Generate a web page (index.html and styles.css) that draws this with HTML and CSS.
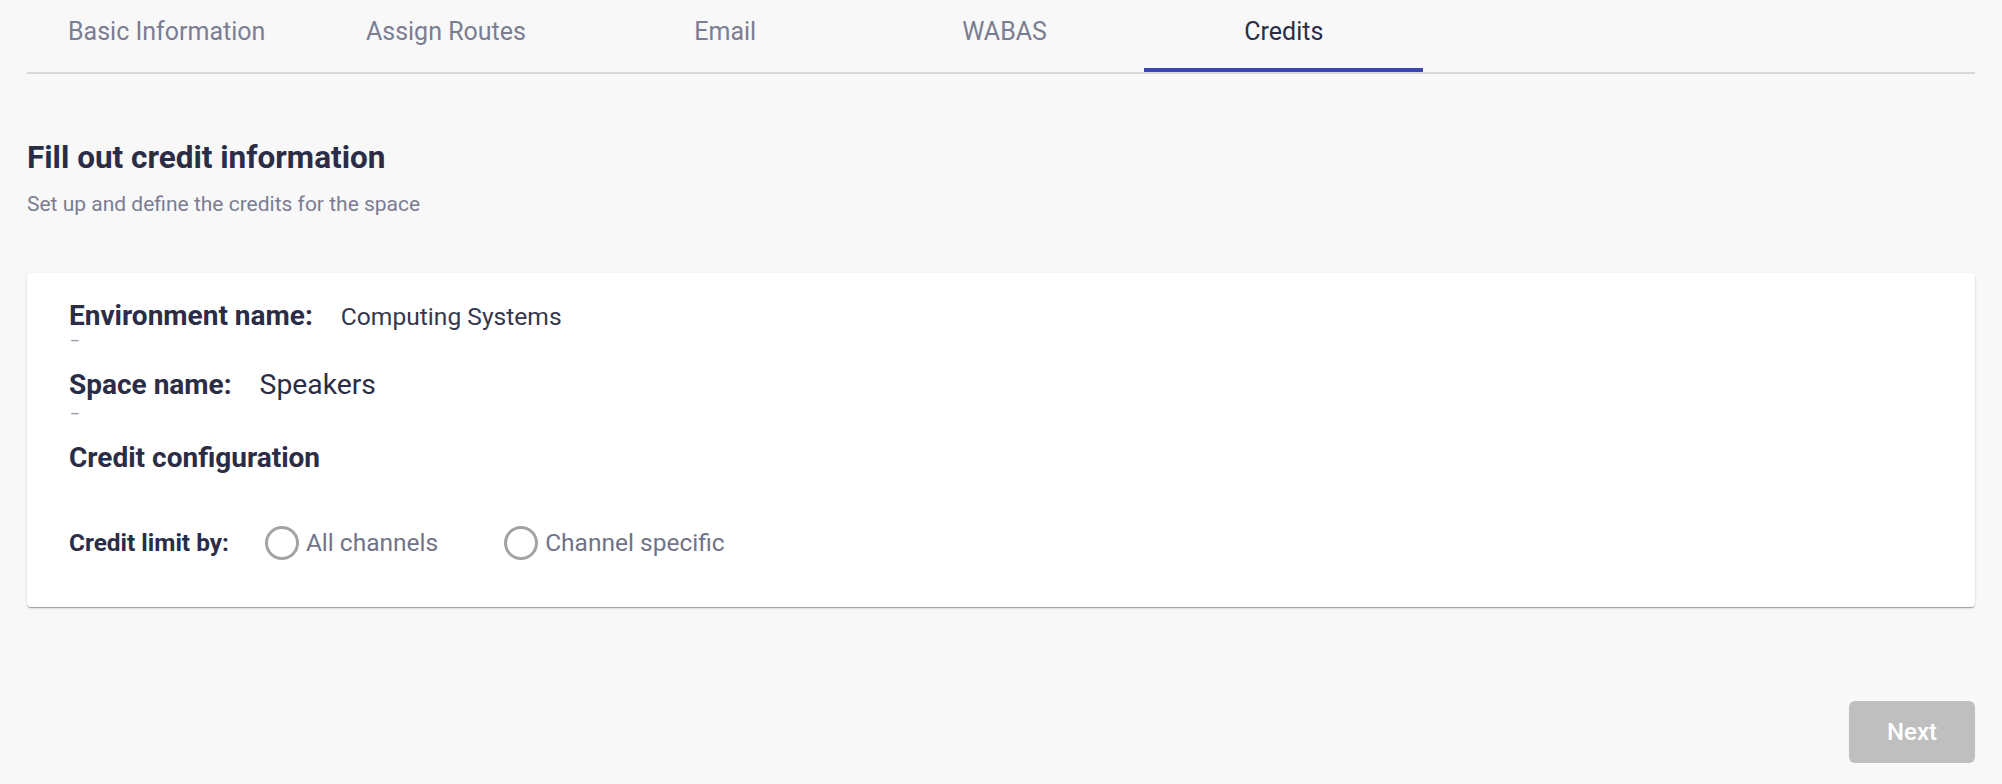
FILE: index.html
```html
<!DOCTYPE html>
<html lang="en">
  <head>
    <title>Space credits</title>
    <meta charset="utf-8">
    <link rel="stylesheet" href="styles.css">
  </head>
  <body>

  <div class="tabs">
    <div class="tab">Basic Information</div>
    <div class="tab">Assign Routes</div>
    <div class="tab">Email</div>
    <div class="tab">WABAS</div>
    <div class="tab active">Credits</div>
  </div>

  <h2 class="title">Fill out credit information</h2>
  <p class="subtitle">Set up and define the credits for the space</p>

  <div class="card">
    <div class="field">
      <span class="label">Environment name:</span>
      <span class="value">Computing Systems</span>
    </div>
    <div class="hint first">&ndash;</div>

    <div class="field space-row">
      <span class="label">Space name:</span>
      <span class="value big">Speakers</span>
    </div>
    <div class="hint second">&ndash;</div>

    <div class="field config-row">
      <span class="label">Credit configuration</span>
    </div>

    <div class="limit-row">
      <span class="limit-label">Credit limit by:</span>
      <label class="radio">
        <span class="circle"></span>
        <span class="radio-text">All channels</span>
      </label>
      <label class="radio">
        <span class="circle"></span>
        <span class="radio-text">Channel specific</span>
      </label>
    </div>
  </div>

  <div class="actions">
    <button class="next" type="button" disabled>Next</button>
  </div>

  </body>
</html>
```

FILE: styles.css
```css
  html {
    height: 100%;
  }
  body {
    margin: 0;
    padding: 0 27px;
    background: #f8f8f8;
    color: #2b2d46;
    font-family: Roboto, "Liberation Sans", sans-serif;
    height: 100%;
  }

  .tabs {
    display: flex;
    border-bottom: 2px solid #d9d9d9;
  }
  .tab {
    flex: 0 0 279.3px;
    text-align: center;
    font-size: 25px;
    line-height: 30px;
    padding: 17px 0 21px;
    border-bottom: 4px solid transparent;
    color: #7b7d93;
  }
  .tab.active {
    color: #2b2d46;
    border-bottom-color: #3a47ae;
  }

  .title {
    margin: 66px 0 0;
    font-size: 31.5px;
    line-height: 36px;
    font-weight: 700;
  }
  .subtitle {
    margin: 16px 0 0;
    font-size: 21px;
    line-height: 24px;
    color: #7b7d93;
  }

  .card {
    margin-top: 57px;
    background: #fff;
    border-radius: 4px;
    padding: 27px 42px 47px;
    box-shadow: 0 2px 1px -1px rgba(0,0,0,0.2), 0 1px 1px 0 rgba(0,0,0,0.14), 0 1px 3px 0 rgba(0,0,0,0.12);
  }

  .field {
    display: flex;
    align-items: baseline;
    line-height: 32px;
  }
  .space-row {
    margin-top: 20px;
  }
  .config-row {
    margin-top: 20px;
  }
  .label {
    font-size: 28px;
    font-weight: 700;
    margin-right: 28px;
  }
  .value {
    font-size: 24.6px;
    color: #35374c;
  }
  .value.big {
    font-size: 28.3px;
    color: #2b2d46;
  }
  .hint {
    font-size: 15px;
    font-weight: 500;
    line-height: 16px;
    height: 16px;
    color: #a0a0a8;
    padding-left: 1px;
  }
  .hint.first {
    margin-top: 0;
  }
  .hint.second {
    margin-top: 5px;
  }

  .limit-row {
    display: flex;
    align-items: center;
    margin-top: 52px;
    height: 34px;
  }
  .limit-label {
    font-size: 24.4px;
    line-height: 28px;
    font-weight: 700;
    margin-right: 36px;
  }
  .radio {
    display: flex;
    align-items: center;
    margin-right: 66px;
  }
  .circle {
    flex: none;
    box-sizing: border-box;
    width: 34px;
    height: 34px;
    border: 3px solid #a3a3a3;
    border-radius: 50%;
    margin-right: 7px;
  }
  .radio-text {
    font-size: 24.5px;
    line-height: 28px;
    color: #717388;
  }

  .actions {
    display: flex;
    justify-content: flex-end;
    margin-top: 94px;
  }
  .next {
    width: 126px;
    height: 62px;
    border: 0;
    border-radius: 6px;
    background: #bfbfbf;
    color: #fff;
    font-family: Roboto, "Liberation Sans", sans-serif;
    font-size: 24px;
    font-weight: 500;
  }
```
